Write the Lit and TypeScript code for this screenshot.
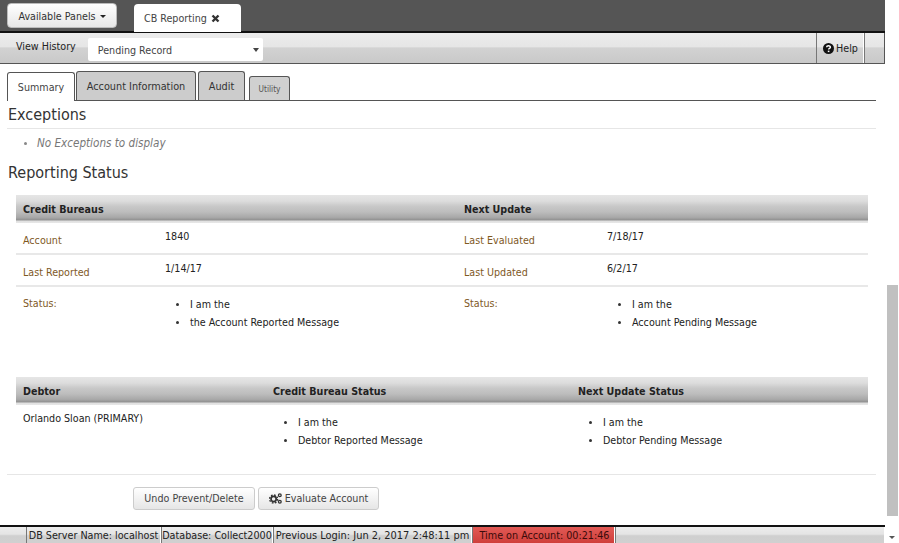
import { LitElement, html, css } from "lit";
import { customElement } from "lit/decorators.js";

@customElement("app-root")
export class AppRoot extends LitElement {
  static styles = css`
    :host { display: flex; width: 899px; height: 543px; overflow: hidden; background: #fff; color: #222;
      font-family: "DejaVu Sans", Tahoma, sans-serif; font-size: 10.65px; font-stretch: condensed; }
    * { box-sizing: border-box; }
    .main { width: 885px; display: flex; flex-direction: column; height: 543px; flex: none; }
    .top { height: 33px; background: #555; border-bottom: 2px solid #111; padding: 3px 0 0 7px; display: flex; gap: 17px; flex: none; }
    .avail { width: 110px; height: 25px; padding-top: 1px; background: linear-gradient(#fff,#e6e6e6); border: 1px solid #bbb; border-radius: 4px; display: flex; align-items: center; justify-content: center; gap: 4px; color: #333; }
    .caret { width: 0; height: 0; border: 3.5px solid transparent; border-top-color: #222; border-bottom: 0; }
    .cbtab { width: 107px; height: 28px; margin-top: 1px; background: #fff; border-radius: 4px 4px 0 0; display: flex; align-items: center; padding-left: 10px; gap: 4px; color: #444; }
    .tool { height: 31px; flex: none; display: flex; align-items: stretch; border-bottom: 1px solid #555; border-right: 1px solid #555;
      background: linear-gradient(#ececec 0, #e6e6e6 45%, #d2d2d2 50%, #c9c9c9 100%); }
    .vh { margin: 7px 12px 0 16px; color: #222; }
    .sel { width: 175px; height: 23px; margin-top: 5px; background: #fff; border-radius: 2px; display: flex; align-items: center; justify-content: space-between; padding: 1px 4px 0 10px; color: #444; }
    .sel .caret { border-width: 4px 3px 0; border-top-color: #444; }
    .grow { flex: 1; }
    .help { width: 48px; border-left: 1px solid #777; border-right: 1px solid #fff; display: flex; align-items: center; justify-content: center; gap: 2px; color: #222; padding-left: 1px; }
    .tail { width: 20px; border-left: 1px solid #777; }
    .content { flex: 1; min-height: 0; padding: 8px 9px 0 7px; display: flex; flex-direction: column; }
    .tabs { height: 29px; flex: none; display: flex; align-items: flex-end; gap: 1px; border-bottom: 1px solid #555; font-size: 10.8px; }
    .tab { height: 29px; border: 1px solid #555; border-bottom: 0; border-radius: 3px 3px 0 0; background: #ccc; display: flex; align-items: center; justify-content: center; color: #333; }
    .tab.on { background: #fff; color: #444; width: 68px; margin-bottom: -1px; height: 29px; font-size: 10.65px; }
    .tab.a { width: 120px; }
    .tab.b { width: 47px; margin-left: 1px; }
    .tab.c { width: 41px; height: 24px; font-size: 8.3px; margin-left: 3px; color: #555; background: #d0d0d0; }
    h2 { margin: 0 0 0 1px; font-weight: normal; font-size: 16px; color: #333; }
    .exc { height: 28px; margin-left: 0; padding: 4px 0 0 1px; border-bottom: 1px solid #e6e6e6; line-height: 20px; flex: none; }
    ul { margin: 0; padding: 0; list-style: none; }
    li { display: flex; align-items: center; gap: 11px; height: 18px; color: #222; }
    li::before { content: ""; width: 3px; height: 3px; border-radius: 50%; background: #333; flex: none; }
    .none { padding: 0 0 0 17px; margin-top: 5px; height: 18px; font-style: italic; font-size: 11.6px; }
    .none li { color: #777; gap: 10px; }
    .none li::before { background: #888; }
    .rs { margin-top: 10px; height: 22px; line-height: 22px; flex: none; }
    .tbl { margin: 11px 8px 0 9px; flex: none; }
    .thead { height: 28px; display: grid; align-items: center; padding-left: 7px; font-weight: bold; color: #222;
      background: linear-gradient(#e6e6e6 0, #dcdcdc 22%, #c8c8c8 40%, #bdbdbd 60%, #a8a8a8 80%, #8f8f8f 90%, #dedede 92%, #e8e8e8 100%); }
    .g1 { grid-template-columns: 441px 1fr; }
    .row { display: grid; grid-template-columns: 142px 299px 143px 1fr; padding-left: 7px; border-bottom: 2px solid #e8e8e8; height: 32px; }
    .row.st { border: 0; height: 90px; }
    .lab { color: #80591f; padding-top: 11px; line-height: 14px; }
    .val { padding-top: 7px; line-height: 14px; color: #222; }
    .row.st .lab { padding-top: 10px; }
    .row.st ul { padding: 8px 0 0 11px; }
    .g2 { grid-template-columns: 250px 305px 1fr; margin-top: 0; }
    .drow { display: grid; grid-template-columns: 250px 305px 1fr; padding-left: 7px; height: 69px; }
    .drow ul { padding: 8px 0 0 11px; }
    .drow .name { padding-top: 7px; line-height: 14px; color: #222; }
    .rule { border-top: 1px solid #e6e6e6; flex: none; }
    .btns { display: flex; gap: 3px; padding: 12px 0 0 126px; }
    .btn { height: 23px; background: linear-gradient(#fff,#e6e6e6); border: 1px solid #ccc; border-radius: 3px; display: flex; align-items: center; justify-content: center; gap: 3px; color: #444; }
    .b1 { width: 122px; }
    .b2 { width: 121px; }
    .status { height: 18px; flex: none; border-top: 2px solid #111; display: flex; font-size: 10.7px; background: linear-gradient(#ececec,#e4e4e4 45%,#cfcfcf 55%,#d0d0d0); }
    .s { display: flex; align-items: center; justify-content: center; border-left: 1px solid #777; border-right: 1px solid #fff; color: #222; height: 100%; white-space: nowrap; }
    .s0 { width: 26px; border: 0; }
    .s1 { width: 135px; }
    .s2 { width: 112px; }
    .s3 { width: 199px; font-size: 10.95px; }
    .s4 { width: 143px; background: linear-gradient(#e25a55,#cf3f3b); color: #3a0b0a; padding-left: 2px; }
    .bar { width: 14px; flex: none; background: #fff; display: flex; flex-direction: column; }
    .track { height: 285px; flex: none; }
    .thumb { margin-left: 2px; width: 11px; height: 231px; background: #c0c0c0; flex: none; }
    .down { margin: 20px 0 0 4px; width: 0; height: 0; border: 3.5px solid transparent; border-top-color: #555; border-bottom: 0; }
  `;

  render() {
    return html`
      <div class="main">
        <div class="top">
          <div class="avail">Available Panels <span class="caret"></span></div>
          <div class="cbtab">CB Reporting
            <svg width="9" height="9" viewBox="0 0 9 9"><path d="M1.5 1.5L7.5 7.5M7.5 1.5L1.5 7.5" stroke="#333" stroke-width="2.4"/></svg>
          </div>
        </div>
        <div class="tool">
          <div class="vh">View History</div>
          <div class="sel">Pending Record <span class="caret"></span></div>
          <div class="grow"></div>
          <div class="help">
            <svg width="11" height="11" viewBox="0 0 11 11"><circle cx="5.5" cy="5.5" r="5.5" fill="#111"/><path d="M3.6 4.2C3.7 2.2 7.4 2.2 7.4 4.2C7.4 5.4 5.6 5.3 5.6 6.6" fill="none" stroke="#fff" stroke-width="1.4"/><rect x="4.8" y="7.6" width="1.6" height="1.5" fill="#fff"/></svg>
            Help</div>
          <div class="tail"></div>
        </div>
        <div class="content">
          <div class="tabs">
            <div class="tab on">Summary</div>
            <div class="tab a">Account Information</div>
            <div class="tab b">Audit</div>
            <div class="tab c">Utility</div>
          </div>
          <h2 class="exc">Exceptions</h2>
          <ul class="none"><li>No Exceptions to display</li></ul>
          <h2 class="rs">Reporting Status</h2>
          <div class="tbl">
            <div class="thead g1"><span>Credit Bureaus</span><span>Next Update</span></div>
            <div class="row"><span class="lab">Account</span><span class="val">1840</span><span class="lab">Last Evaluated</span><span class="val">7/18/17</span></div>
            <div class="row"><span class="lab">Last Reported</span><span class="val">1/14/17</span><span class="lab">Last Updated</span><span class="val">6/2/17</span></div>
            <div class="row st"><span class="lab">Status:</span><ul><li>I am the</li><li>the Account Reported Message</li></ul><span class="lab">Status:</span><ul><li>I am the</li><li>Account Pending Message</li></ul></div>
            <div class="thead g2"><span>Debtor</span><span>Credit Bureau Status</span><span>Next Update Status</span></div>
            <div class="drow"><span class="name">Orlando Sloan (PRIMARY)</span><ul><li>I am the</li><li>Debtor Reported Message</li></ul><ul><li>I am the</li><li>Debtor Pending Message</li></ul></div>
          </div>
          <div class="rule"></div>
          <div class="btns">
            <div class="btn b1">Undo Prevent/Delete</div>
            <div class="btn b2">
              <svg width="13" height="11" viewBox="0 0 13 11">
                <circle cx="4.6" cy="6" r="2.6" fill="none" stroke="#333" stroke-width="1.7"/>
                <circle cx="4.6" cy="6" r="4" fill="none" stroke="#333" stroke-width="1.4" stroke-dasharray="1.7 1.44"/>
                <circle cx="10.8" cy="2.3" r="1.4" fill="none" stroke="#333" stroke-width="1.3"/>
                <circle cx="10.8" cy="8.7" r="1.4" fill="none" stroke="#333" stroke-width="1.3"/>
              </svg>
              Evaluate Account</div>
          </div>
          <div class="grow"></div>
        </div>
        <div class="status">
          <div class="s s0"></div>
          <div class="s s1">DB Server Name: localhost</div>
          <div class="s s2">Database: Collect2000</div>
          <div class="s s3">Previous Login: Jun 2, 2017 2:48:11 pm</div>
          <div class="s s4">Time on Account: 00:21:46</div>
          <div class="s grow"></div>
        </div>
      </div>
      <div class="bar"><div class="track"></div><div class="thumb"></div><div class="down"></div></div>
    `;
  }
}
